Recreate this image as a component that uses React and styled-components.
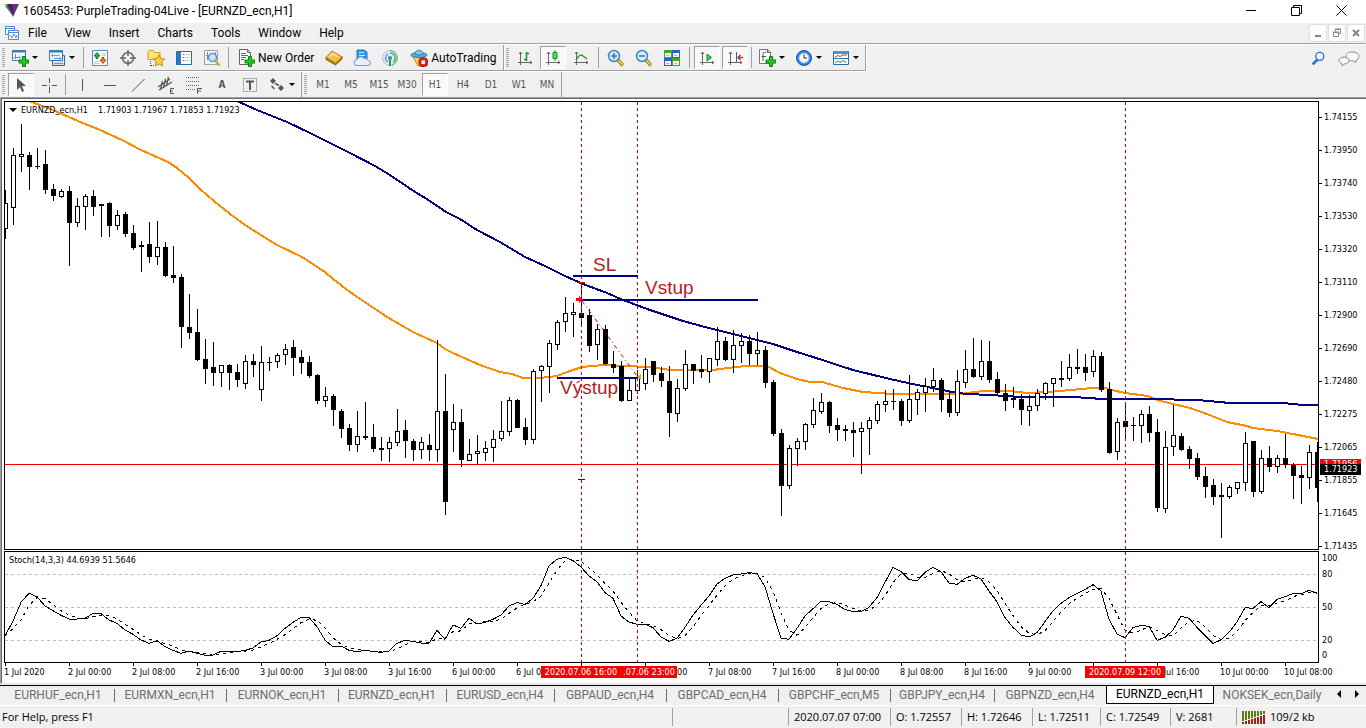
import React from 'react';
import styled, { createGlobalStyle, css } from 'styled-components';

const uiFont = '"Open Sans", "Noto Sans", sans-serif';
const captionFont = 'Roboto, "Open Sans", sans-serif';
const chartFont = '"DejaVu Sans Condensed", "DejaVu Sans", sans-serif';

const GlobalStyle = createGlobalStyle`
  * {
    box-sizing: border-box;
  }
  body {
    margin: 0;
    background: #f0f0f0;
    color: #000;
    font-family: ${uiFont};
    font-size: 11px;
    line-height: 16px;
  }
  button {
    margin: 0;
    padding: 0;
    border: 0;
    background: none;
    color: inherit;
    font: inherit;
  }
  svg {
    display: block;
    flex: none;
  }
`;

const Terminal = styled.div`
  display: flex;
  flex-direction: column;
  height: 100vh;
  overflow: hidden;
`;

/* title and menu */

const TitleBar = styled.header`
  display: flex;
  align-items: center;
  flex: 0 0 23px;
  padding: 0 2px 2px 4px;
  background: #fff;
  h1 {
    flex: 1;
    margin: 0 0 0 4px;
    font-family: ${captionFont};
    font-size: 12px;
    font-weight: 400;
    white-space: nowrap;
  }
`;

const WindowButton = styled.button`
  display: flex;
  align-items: center;
  justify-content: center;
  width: 45px;
  height: 21px;
`;

const MenuBar = styled.nav`
  display: flex;
  align-items: center;
  flex: 0 0 22px;
  padding: 0 1px 2px 5px;
  border-bottom: 1px solid #fff;
  box-shadow: inset 0 -1px 0 #a0a0a0;
`;

const MenuItem = styled.button`
  height: 19px;
  padding: 0 9px;
  font-family: ${captionFont};
  font-size: 12px;
`;

const Spacer = styled.div`
  flex: 1;
`;

const MdiButton = styled.button`
  display: flex;
  align-items: center;
  justify-content: center;
  width: 18px;
  height: 18px;
  margin-left: 1px;
  border: 1px solid #e0e0e0;
  background: #fdfdfd;
`;

/* toolbars */

const Toolbar = styled.div`
  display: flex;
  flex: 0 0 ${(p) => p.$height};
`;

const Group = styled.div`
  display: flex;
  align-items: center;
  border-right: 1px solid #a0a0a0;
  ${(p) =>
    p.$ruled &&
    css`
      height: 26px;
      border-bottom: 1px solid #a0a0a0;
      box-shadow: 1px 1px 0 #fff;
    `}
`;

const Grip = styled.span`
  width: 3px;
  height: 20px;
  margin: 0 2px;
  background: repeating-linear-gradient(#a8a8a8 0 1px, #f0f0f0 1px 2px);
`;

const Separator = styled.span`
  width: 1px;
  height: 21px;
  margin: 0 ${(p) => (p.$wide ? '3px' : '2px')};
  background: #a0a0a0;
`;

const ToolButton = styled.button`
  display: flex;
  align-items: center;
  justify-content: center;
  width: 28px;
  height: 23px;
  color: #555;
  ${(p) =>
    p.$pressed &&
    css`
      width: 26px;
      margin: 0 1px;
      border: 1px solid #fff;
      border-top-color: #a0a0a0;
      border-left-color: #a0a0a0;
      background: #f9f9f9;
    `}
`;

const PeriodButton = styled(ToolButton)`
  font-family: ${chartFont};
  font-size: 10px;
`;

const DropButton = styled.button`
  display: flex;
  align-items: center;
  gap: 3px;
  width: 37px;
  height: 23px;
  padding-left: 4px;
  &::after {
    content: '';
    border: 3px solid transparent;
    border-top-color: #000;
    border-bottom: 0;
  }
`;

const TextButton = styled.button`
  display: flex;
  align-items: center;
  gap: 3px;
  height: 23px;
  padding: 0 6px;
  font-family: ${captionFont};
  font-size: 12px;
  white-space: nowrap;
`;

const ToolbarEnd = styled.div`
  display: flex;
  align-items: center;
  gap: 3px;
  margin-left: auto;
  padding-right: 3px;
`;

/* chart window */

const ChartWindow = styled.main`
  display: grid;
  grid-template-columns: minmax(0, 1fr) 47px;
  grid-template-rows: minmax(0, 449fr) minmax(0, 112fr) 19px;
  row-gap: 1px;
  flex: 1;
  min-height: 0;
  padding: 3px 0 0 3px;
  border: 1px solid #a0a0a0;
  border-right: 0;
  border-bottom-color: #e3e3e3;
  background: #fff;
  box-shadow: inset 1px 1px 0 #696969;
  font-family: ${chartFont};
  font-size: 9px;
  line-height: 12px;
`;

const Pane = styled.section`
  position: relative;
  min-height: 0;
  border: 1px solid #000;
  svg {
    position: absolute;
    inset: 0;
    width: 100%;
    height: 100%;
  }
`;

const PaneTitle = styled.p`
  position: absolute;
  top: 2px;
  left: 4px;
  display: flex;
  align-items: center;
  gap: 4px;
  margin: 0;
  white-space: nowrap;
`;

const SymbolName = styled.span`
  min-width: 73px;
`;

const Triangle = styled.i`
  border: 4px solid transparent;
  border-top-color: #000;
  border-bottom: 0;
`;

const PriceScale = styled.ol`
  position: relative;
  display: flex;
  flex-direction: column;
  justify-content: space-between;
  margin: 0;
  padding: 12px 0 0;
  list-style: none;
  line-height: 8px;
`;

const PriceLabel = styled.li`
  display: flex;
  align-items: center;
  gap: 2px;
  &::before {
    content: '';
    width: 3px;
    height: 1px;
    background: #000;
  }
`;

const PriceTag = styled.li`
  position: absolute;
  left: 1px;
  width: 41px;
  padding-left: 4px;
  background: ${(p) => p.$color};
  color: #fff;
  line-height: 11px;
`;

const LevelScale = styled.ol`
  display: grid;
  grid-template-rows: 14fr 18fr 48fr 18fr 12fr 2fr;
  align-items: center;
  margin: 0;
  padding: 0 0 0 3px;
  list-style: none;
  line-height: 8px;
`;

const TimeScale = styled.div`
  position: relative;
  grid-column: 1 / 3;
  display: grid;
  grid-template-columns: repeat(20, minmax(0, 64fr)) minmax(0, 82fr);
  margin-top: -1px;
  line-height: 12px;
`;

const TimeLabel = styled.span`
  white-space: nowrap;
  &::before {
    content: '';
    display: block;
    width: 1px;
    height: 3px;
    margin-left: 1px;
    background: #000;
  }
`;

const TimeTag = styled.span`
  position: absolute;
  top: 3px;
  width: ${(p) => p.$width};
  background: #f00;
  color: #fff;
  text-align: center;
`;

/* tabs and status */

const TabBar = styled.nav`
  display: flex;
  flex: 0 0 20px;
  margin-top: 1px;
  padding-left: 2px;
  border-top: 1px solid #000;
  font-family: ${captionFont};
  font-size: 12px;
  overflow: hidden;
`;

const Tab = styled.button`
  display: flex;
  align-items: center;
  justify-content: center;
  flex: 0 0 ${(p) => p.$width};
  height: 18px;
  color: #6d6d6d;
  white-space: nowrap;
  & + & {
    background: linear-gradient(#6d6d6d, #6d6d6d) left center / 1px 13px no-repeat;
  }
  &:nth-last-of-type(3) {
    background: none;
  }
  &&[aria-current] {
    margin-top: -1px;
    height: 19px;
    border: 1px solid #000;
    border-top: 0;
    background: #fff;
    color: #000;
  }
`;

const TabArrow = styled.button`
  display: flex;
  align-items: center;
  justify-content: center;
  width: 18px;
  height: 16px;
`;

const StatusBar = styled.footer`
  display: flex;
  align-items: center;
  flex: 0 0 23px;
  border-top: 1px solid #fff;
  white-space: nowrap;
`;

const StatusCell = styled.span`
  display: flex;
  align-items: center;
  gap: 4px;
  flex: ${(p) => (p.$width ? `0 0 ${p.$width}` : '1')};
  height: 18px;
  padding-left: 5px;
  border-left: 1px solid #a0a0a0;
  &:first-child {
    padding-left: 2px;
    border-left: 0;
  }
`;

/* icons */

const Icon = ({ children, size = 18, ...rest }) => (
  <svg width={size} height={size} viewBox="0 0 18 18" fill="none" aria-hidden="true" {...rest}>
    {children}
  </svg>
);

const Plus = () => (
  <path d="M11.500 7.500h3v3.500h3.500v3h-3.500v3.500h-3v-3.500h-3.500v-3h3.500z" fill="#27c927" stroke="#0a7d12" />
);

const LogoIcon = () => (
  <svg width="15" height="13" viewBox="0 0 15 13" aria-hidden="true">
    <path d="M0 0h5l4 12z" fill="#c9cf3e" />
    <path d="M1 2l3-1 5 11z" fill="#3c8f4a" />
    <path d="M3 0h12L9 13z" fill="#6b2d86" />
    <path d="M3 0h5l2 12z" fill="#42205e" />
  </svg>
);

const MenuLogo = () => (
  <svg width="14" height="14" viewBox="0 0 14 14" fill="#fff" stroke="#4d8ad6" aria-hidden="true">
    <path d="M.5.5h9v8h-9zM.5 2.500h9" />
    <path d="M3.500 4.500h10v9h-10zM3.500 6.500h10" />
    <path d="M5 9l2 3 2-4 2 4 1-3" fill="none" />
  </svg>
);

const NewChartIcon = () => (
  <Icon>
    <path d="M1.500 1.500h13v10h-13z" fill="#f4f9ff" stroke="#3d7ab8" />
    <path d="M1 2.500h14" stroke="#3d7ab8" strokeWidth="2" />
    <path d="M4.500 5v5M3 8.500h6M9 6.500v3" stroke="#5d90c4" />
    <Plus />
  </Icon>
);

const ProfilesIcon = () => (
  <Icon>
    <path d="M4.500 6.500h12v10h-12z" fill="#cfe2f7" stroke="#2d66a5" />
    <path d="M1.500 1.500h13v10h-13z" fill="#eaf3fd" stroke="#3d7ab8" />
    <path d="M1 2.500h14" stroke="#3d7ab8" strokeWidth="2" />
    <path d="M3.500 6.500h8M5 5L3.500 6.500 5 8M6 9.500h7M11.500 8L13 9.500 11.500 11M6 14.500h9" stroke="#6d9ccc" />
  </Icon>
);

const MarketIcon = () => (
  <Icon>
    <path d="M1.500 1.500h15v15h-15z" fill="#fff" stroke="#4f8cc9" />
    <path d="M10 4.500h5M11 6.500h4M3 12.500h5M3 14.500h5" stroke="#c9c9c9" />
    <path d="M6 3.500L9 7H7v2.500H5V7H3z" fill="#2fb82f" stroke="#15801c" />
    <path d="M12 14.500L15 11h-2V8.500h-2V11H9z" fill="#ff7b3d" stroke="#c53a0a" />
  </Icon>
);

const TargetIcon = () => (
  <Icon stroke="#666">
    <circle cx="9" cy="9" r="5.500" strokeWidth="1.500" />
    <path d="M9 1v6M9 11v6M1 9h6M11 9h6" strokeWidth="1.500" />
  </Icon>
);

const FavoritesIcon = () => (
  <Icon>
    <path d="M1 2.500l1-1h4l1.500 2H13v7H1z" fill="#ffe27a" stroke="#c7a02b" />
    <path d="M3.500 12v5M4 16.500h4" stroke="#444" strokeDasharray="1 1" />
    <path d="M12 6l1.800 3.500 4 .500-3 2.800.800 4-3.600-1.900L8.400 16.800l.800-4-3-2.800 4-.500z" fill="#ffd23e" stroke="#c48a12" />
  </Icon>
);

const NavigatorIcon = () => (
  <Icon>
    <path d="M1.500 2.500h15v13h-15z" fill="#fff" stroke="#2568ad" />
    <path d="M2 3h4v12H2z" fill="#2d79c4" />
    <path d="M8 5.500h7M8 8.500h7M8 11.500h7" stroke="#b8cde6" />
    <path d="M8 5.500h1M8 8.500h1M8 11.500h1" stroke="#c33" />
  </Icon>
);

const TesterIcon = () => (
  <Icon>
    <path d="M1.500 1.500h13v14h-13z" fill="#f5f5f5" stroke="#a0a0a0" />
    <path d="M4.500 3v8M7.500 5v3M3 6.500h3M12.500 3v3" stroke="#888" />
    <circle cx="9.500" cy="8.500" r="4" fill="#c4e2f9" fillOpacity=".85" stroke="#5a96cf" strokeWidth="1.500" />
    <path d="M12.500 12l4 4.500" stroke="#d9a520" strokeWidth="2.500" />
  </Icon>
);

const NewOrderIcon = () => (
  <Icon>
    <path d="M2.500.5h8l3 3v12h-11z" fill="#fff" stroke="#666" />
    <path d="M10.500.5v3h3M4 4.500h5M4 6.500h7M4 8.500h5M4 10.500h3" stroke="#666" />
    <Plus />
  </Icon>
);

const BookIcon = () => (
  <Icon>
    <path d="M1 8v2.500l9.500 5.500 6.500-6V7.500L10.500 14z" fill="#b97d18" stroke="#8c5f0e" />
    <path d="M1 8.500L7 2l10 6-6.500 6z" fill="#f0c14b" stroke="#b07a14" />
    <path d="M4.500 8L8 4.500l5 3" stroke="#ffe79b" strokeWidth="1.500" />
  </Icon>
);

const CloudIcon = () => (
  <Icon>
    <path d="M4 1h7l3 2v8H4z" fill="#2f9ae8" stroke="#1878c4" />
    <path d="M6 3.500h5M6 6.500h6" stroke="#cbe8ff" />
    <path d="M4 16.500a3 3 0 0 1 0-6 4 4 0 0 1 7-1 3.500 3.500 0 0 1 4 2 2.500 2.500 0 0 1 0 5z" fill="#e9eef7" stroke="#7c93bb" />
  </Icon>
);

const SignalIcon = () => (
  <Icon>
    <circle cx="9" cy="9" r="7.500" fill="#e3edf0" stroke="#a8c4cf" />
    <path d="M9 4a5 5 0 0 1 3 9" stroke="#4fae62" strokeWidth="1.500" />
    <path d="M9 1.500a7.500 7.500 0 0 1 2 14.500" stroke="#7bbd83" strokeWidth="1.500" />
    <path d="M7 13a4.500 4.500 0 0 1 0-8" stroke="#6b9dc9" strokeWidth="1.500" />
    <circle cx="9" cy="9" r="2" fill="#3a86c8" />
    <path d="M9 11v6" stroke="#2c9c44" strokeWidth="2" />
  </Icon>
);

const AutoIcon = () => (
  <Icon>
    <path d="M3 8h12l-2 8-5 1z" fill="#ffd357" stroke="#c7911f" />
    <ellipse cx="9" cy="6" rx="8" ry="2.500" fill="#56aede" stroke="#2b7fb5" />
    <path d="M5 5c0-5 8-5 8 0-2 1.500-6 1.500-8 0z" fill="#7cc8ec" stroke="#2b7fb5" />
    <rect x="9" y="9" width="8.500" height="8.500" rx="3" fill="#e1261c" stroke="#a8140c" />
    <path d="M11.500 11.500h3.500v3.500h-3.500z" fill="#fff" />
  </Icon>
);

const Axes = () => <path d="M4.500 3v13M2 13.500h14M3 5l1.500-2L6 5M14 12l2 1.500-2 1.500" stroke="#666" />;

const BarsIcon = () => (
  <Icon>
    <Axes />
    <path d="M8 10.500h2.500M10.500 3v9M10.500 4.500H13" stroke="#16922a" strokeWidth="1.500" />
  </Icon>
);

const CandlesIcon = () => (
  <Icon>
    <Axes />
    <path d="M11 1v11" stroke="#16922a" />
    <path d="M9 3.500h4v6H9z" fill="#4be04f" stroke="#16922a" />
  </Icon>
);

const LineIcon = () => (
  <Icon>
    <Axes />
    <path d="M4 11c3-5 5-6 7-4l4 3" stroke="#2a9d3a" strokeWidth="1.500" />
  </Icon>
);

const ZoomIcon = ({ plus }) => (
  <Icon>
    <path d="M11 11l5 5.500" stroke="#a87910" strokeWidth="3.500" />
    <path d="M11 11l5 5" stroke="#ffd94f" strokeWidth="1.500" />
    <circle cx="7" cy="7" r="5.500" fill="#d6ecfb" stroke="#3d86c6" strokeWidth="1.500" />
    <path d={plus ? 'M4 7h6M7 4v6' : 'M4 7h6'} stroke="#2f78b8" strokeWidth="1.500" />
  </Icon>
);

const TilesIcon = () => (
  <Icon>
    <path d="M1 1h8v8H1zM9 9h8v8H9z" fill="#46a325" />
    <path d="M9 1h8v8H9zM1 9h8v8H1z" fill="#2c60cf" />
    <path d="M2 4h6v4H2zM10 4h6v4h-6zM2 12h6v4H2zM10 12h6v4h-6z" fill="#f2f7ff" />
    <path d="M3 6.500h3M11 6.500h3M3 14.500h3M11 14.500h3" stroke="#9cb6e0" />
  </Icon>
);

const ScrollIcon = () => (
  <Icon>
    <Axes />
    <path d="M9 5l4.500 3.500L9 12z" fill="#3fd04b" stroke="#16922a" />
  </Icon>
);

const ShiftIcon = () => (
  <Icon>
    <Axes />
    <path d="M10.500 3v10" stroke="#2568ad" />
    <path d="M17 8.500h-5M14.500 6L12 8.500l2.500 2.500" stroke="#c23a10" strokeWidth="1.500" />
  </Icon>
);

const IndicatorIcon = () => (
  <Icon>
    <path d="M1.500.5h8l3 3v11h-11z" fill="#fff" stroke="#777" />
    <path d="M9.500.5v3h3M8 3.500c-3-1-3 1-3 3V12M3.500 7.500H8" stroke="#555" />
    <Plus />
  </Icon>
);

const ClockIcon = () => (
  <Icon>
    <circle cx="9" cy="9" r="7.500" fill="#2e7fdd" stroke="#1c58a5" />
    <circle cx="9" cy="9" r="5" fill="#f1f6fc" stroke="#9cc3ee" />
    <path d="M9 5.500V9h3" stroke="#333" />
  </Icon>
);

const TemplateIcon = () => (
  <Icon>
    <path d="M1.500 2.500h15v13h-15z" fill="#fff" stroke="#2b6cb0" />
    <path d="M2 3.500h14" stroke="#4d93d9" strokeWidth="3" />
    <path d="M2 9.500h14" stroke="#2b6cb0" />
    <path d="M3 8l3-1.500 2 1 3-1.500h4" stroke="#b03a2e" />
    <path d="M3 14l3-2 2 1.500 3-2 3 2" stroke="#2d9a3b" />
  </Icon>
);

const SearchIcon = () => (
  <Icon size={16}>
    <path d="M9 9l-6 6" stroke="#2f6fe0" strokeWidth="3" />
    <circle cx="11" cy="6" r="4.500" fill="#f4f8ff" stroke="#2f6fe0" strokeWidth="1.500" />
  </Icon>
);

const ChatIcon = () => (
  <svg width="22" height="18" viewBox="0 0 22 18" fill="#f8f8f8" stroke="#8c8c8c" aria-hidden="true">
    <path d="M14 2c4 0 7 1.500 7 4.500 0 2-1.500 3-3 3.500v2.500L15.500 11C11 11 8 9.500 8 6.500S10.500 2 14 2z" />
    <path d="M6 7c3 0 5 1.500 5 3.500S9 14 6.500 14L4 16v-2.500c-1.500-.500-3-1.500-3-3C1 8.500 3 7 6 7z" />
  </svg>
);

const CursorIcon = () => (
  <Icon>
    <path d="M5 2v12l3-3 2 5 2-1-2-5h4z" fill="#555" />
  </Icon>
);

const CrossIcon = () => (
  <Icon>
    <path d="M9.500 2v5M9.500 11v6M2 9.500h5M12 9.500h5M9 9.500h1" stroke="#555" />
  </Icon>
);

const ChannelIcon = () => (
  <Icon>
    <path d="M1 11L13 3M2 14L15 6M5.500 5l-2 9M8.500 3l-2 9M11.500 1l-2 9" stroke="#555" strokeWidth="1.300" />
    <path d="M17 12.500h-3.500v5H17M13.500 15H16" stroke="#555" />
  </Icon>
);

const FiboIcon = () => (
  <Icon>
    <path d="M1 1.500h14M1 5.500h14M1 9.500h14M1 13.500h9" stroke="#666" strokeDasharray="1 1" />
    <path d="M12.500 18v-5.500H17M12.500 15H16" stroke="#555" />
  </Icon>
);

const LabelIcon = () => (
  <Icon>
    <path d="M2.500 2.500h13v13h-13z" stroke="#666" strokeDasharray="1 1" />
    <path d="M5 5.500h8M9 5.500V14" stroke="#555" strokeWidth="2" />
  </Icon>
);

const ShapesIcon = () => (
  <Icon>
    <path d="M2 5l3-3 3 3-3 3zM10 12l3 3 3-3-3-3z" fill="#555" />
    <path d="M3.500 10l3 3M7 7.500l4 2" stroke="#555" strokeWidth="1.500" />
  </Icon>
);

const TrafficIcon = () => (
  <svg width="24" height="13" viewBox="0 0 24 13" aria-hidden="true">
    {Array.from({ length: 8 }, (_, i) => (
      <g key={i}>
        <rect x={i * 3} y="0" width="2" height={10 - i} fill="#5a7d12" />
        <rect x={i * 3} y={11 - i} width="2" height={2 + i} fill="#a32010" />
      </g>
    ))}
  </svg>
);

/* data */

// high, low, body top, body bottom, 1 = bearish
const CANDLES = [
  [190, 239, 203, 229, 0], [148, 225, 155, 208, 0], [124, 172, 154, 157, 0], [152, 190, 155, 167, 1],
  [148, 169, 166, 167, 1], [150, 194, 164, 190, 1], [184, 201, 189, 196, 1], [189, 198, 191, 197, 0],
  [186, 266, 191, 223, 1], [198, 227, 206, 223, 0], [194, 230, 196, 207, 0], [190, 216, 196, 207, 1],
  [204, 237, 204, 206, 1], [202, 237, 203, 226, 1], [210, 230, 215, 226, 0], [212, 237, 214, 234, 1],
  [225, 250, 233, 248, 1], [241, 272, 245, 247, 1], [222, 263, 244, 257, 1], [221, 265, 247, 257, 0],
  [242, 277, 247, 276, 1], [246, 283, 275, 278, 1], [274, 348, 277, 327, 1], [294, 339, 327, 333, 1],
  [309, 361, 332, 360, 1], [339, 384, 359, 369, 1], [342, 386, 367, 373, 1], [365, 387, 365, 373, 0],
  [364, 390, 365, 373, 1], [364, 387, 372, 380, 1], [355, 389, 361, 384, 0], [354, 377, 361, 365, 1],
  [346, 401, 362, 390, 0], [357, 371, 362, 363, 1], [353, 368, 355, 362, 0], [344, 365, 349, 355, 0],
  [340, 376, 347, 358, 1], [350, 374, 357, 363, 1], [356, 378, 362, 376, 1], [374, 404, 375, 401, 1],
  [387, 407, 396, 401, 0], [394, 426, 396, 410, 1], [409, 438, 411, 429, 1], [424, 451, 428, 445, 1],
  [411, 452, 436, 445, 0], [402, 440, 436, 438, 1], [424, 452, 437, 449, 1], [437, 461, 448, 450, 1],
  [437, 462, 442, 449, 0], [409, 446, 431, 443, 0], [420, 458, 430, 441, 1], [439, 461, 441, 450, 1],
  [437, 459, 442, 450, 0], [434, 461, 445, 450, 1], [340, 462, 411, 450, 0], [374, 515, 411, 502, 1],
  [404, 452, 422, 430, 0], [409, 467, 422, 460, 1], [439, 461, 454, 461, 0], [435, 464, 451, 454, 0],
  [441, 461, 448, 453, 0], [430, 462, 439, 448, 0], [401, 441, 431, 439, 0], [397, 436, 400, 432, 0],
  [399, 428, 400, 428, 1], [418, 445, 427, 440, 1], [369, 444, 371, 440, 0], [365, 402, 366, 371, 0],
  [340, 393, 343, 367, 0], [320, 350, 322, 345, 0], [297, 332, 313, 322, 0], [303, 337, 312, 315, 0],
  [282, 324, 313, 318, 1], [309, 352, 315, 346, 1], [324, 360, 329, 345, 0], [325, 365, 329, 364, 1],
  [351, 373, 364, 368, 1], [361, 402, 366, 401, 1], [379, 401, 390, 401, 0], [370, 394, 377, 391, 0],
  [358, 390, 369, 384, 0], [361, 382, 361, 375, 1], [367, 387, 373, 381, 1], [366, 437, 381, 413, 1],
  [379, 422, 388, 414, 0], [350, 391, 364, 389, 0], [364, 384, 364, 371, 1], [355, 378, 369, 372, 1],
  [358, 383, 358, 372, 0], [327, 366, 341, 360, 0], [337, 361, 341, 360, 1], [330, 373, 345, 360, 0],
  [333, 363, 341, 346, 0], [335, 365, 341, 354, 1], [332, 365, 350, 354, 0], [346, 388, 350, 383, 1],
  [380, 436, 382, 434, 1], [429, 516, 433, 486, 1], [445, 489, 448, 486, 0], [438, 466, 441, 449, 0],
  [423, 450, 424, 442, 0], [398, 428, 410, 425, 0], [393, 414, 402, 412, 0], [401, 433, 402, 426, 1],
  [418, 441, 425, 430, 1], [425, 441, 429, 431, 1], [422, 457, 430, 433, 1], [422, 474, 428, 432, 0],
  [417, 455, 420, 429, 0], [401, 424, 404, 421, 0], [390, 412, 401, 405, 0], [389, 410, 401, 402, 1],
  [399, 426, 401, 421, 1], [375, 423, 399, 421, 0], [389, 415, 392, 400, 0], [378, 412, 386, 393, 0],
  [368, 392, 380, 387, 0], [378, 412, 380, 400, 1], [392, 417, 399, 413, 1], [370, 416, 381, 413, 0],
  [350, 388, 369, 383, 0], [338, 378, 369, 377, 1], [340, 380, 361, 377, 0], [341, 383, 361, 380, 1],
  [372, 396, 379, 393, 1], [384, 411, 393, 401, 1], [387, 408, 398, 400, 1], [394, 425, 399, 410, 1],
  [395, 426, 406, 411, 0], [389, 411, 393, 406, 0], [382, 400, 383, 394, 0], [378, 407, 378, 384, 0],
  [361, 387, 378, 380, 1], [354, 381, 367, 379, 0], [349, 374, 367, 369, 1], [354, 381, 367, 373, 1],
  [350, 377, 356, 372, 0], [352, 392, 356, 390, 1], [382, 454, 389, 453, 1], [418, 460, 422, 452, 0],
  [405, 439, 421, 427, 1], [417, 441, 425, 426, 1], [410, 443, 414, 426, 0], [406, 442, 414, 433, 1],
  [419, 512, 432, 508, 1], [431, 513, 447, 509, 0], [405, 456, 435, 447, 0], [433, 451, 436, 450, 1],
  [446, 469, 449, 459, 1], [453, 480, 458, 477, 1], [467, 498, 476, 487, 1], [479, 505, 485, 497, 1],
  [483, 538, 495, 497, 1], [485, 499, 487, 497, 0], [482, 494, 482, 489, 0], [432, 491, 443, 483, 0],
  [441, 497, 441, 492, 1], [450, 494, 458, 492, 0], [446, 472, 458, 467, 1], [455, 473, 458, 467, 0],
  [434, 468, 458, 465, 1], [463, 499, 465, 476, 1], [466, 504, 475, 478, 1], [445, 489, 452, 478, 0],
  [442, 502, 452, 488, 1],
];

const FAST_MA =
  '29,101 53,110 78,121 100,130 122,140 141,150 168,162 177,168 189,178 200,189 214,201 230,214 248,227 277,245 302,257 325,272 333,279 350,292 387,317 413,332 437,343 445,349 453,353 480,365 500,372 512,374 523,378 540,378 557,376 567,372 582,367 603,365 623,366 650,367 670,370 713,370 720,369 745,366 767,366 780,373 797,379 810,382 822,382 843,388 853,390 863,392 893,394 960,394 983,391 1010,391 1027,393 1047,392 1060,391 1070,390 1093,388 1105,388 1112,390 1125,393 1148,396 1157,400 1173,404 1190,408 1207,414 1227,422 1247,426 1253,428 1277,431 1293,434 1318,439';

const SLOW_MA =
  '237,101 257,110 287,122 310,133 330,143 350,153 375,166 390,175 412,190 430,201 446,212 460,219 477,230 500,242 525,257 545,266 565,276 583,284 607,293 623,300 650,310 683,321 705,327 717,330 733,334 773,344 797,352 813,357 853,370 890,379 917,385 933,388 952,392 967,394 990,395 1020,397 1073,397 1103,399 1150,399 1197,400 1230,403 1283,403 1303,405 1318,405';

// %K per bar, in thirds of a pane pixel counted from the top
const STOCH_K = [
  273, 228, 172, 145, 155, 183, 197, 211, 222, 222, 220, 205, 206, 225, 235, 255, 268, 285, 295, 287, 305, 316, 325,
  318, 325, 331, 330, 319, 319, 320, 316, 309, 291, 286, 272, 250, 232, 217, 217, 245, 285, 306, 303, 316, 320, 316,
  319, 322, 318, 295, 286, 289, 294, 295, 256, 283, 240, 250, 220, 237, 232, 223, 210, 183, 173, 178, 160, 122, 62,
  43, 37, 47, 66, 93, 110, 143, 160, 213, 231, 238, 237, 248, 276, 289, 280, 247, 210, 181, 153, 117, 100, 90, 87,
  83, 86, 125, 205, 279, 283, 250, 213, 191, 169, 170, 178, 194, 199, 199, 187, 158, 112, 67, 80, 103, 108, 82, 67,
  80, 114, 118, 100, 91, 102, 138, 170, 218, 247, 270, 276, 263, 230, 198, 175, 158, 145, 134, 119, 138, 222, 267,
  278, 248, 241, 244, 286, 277, 255, 213, 220, 247, 271, 295, 285, 262, 231, 188, 190, 170, 188, 163, 155, 146, 147,
  136, 145,
];

// %D is the three bar average of %K
const STOCH_D = STOCH_K.map((_, i) => {
  const last = STOCH_K.slice(Math.max(0, i - 2), i + 1);
  return last.reduce((sum, v) => sum + v, 0) / last.length;
});

const toPoints = (values) => values.map((v, i) => `${5 + i * 8},${545 + v / 3}`).join(' ');

const MARKERS = [581, 637, 1125];

const TIME_TAGS = [
  { x: 541, width: '80px', text: '2020.07.06 16:00' },
  { x: 621, width: '56px', text: '.07.06 23:00' },
  { x: 1085, width: '80px', text: '2020.07.09 12:00' },
];

const PRICES = [
  '1.74155', '1.73950', '1.73740', '1.73530', '1.73320', '1.73110', '1.72900',
  '1.72690', '1.72480', '1.72275', '1.72065', '1.71855', '1.71645', '1.71435',
];

const PRICE_TAGS = [
  { y: 459, text: '1.71956', color: '#f00' },
  { y: 464, text: '1.71923', color: '#000' },
];

// blank where a marker tag covers the whole label
const TIMES = [
  '1 Jul 2020', '2 Jul 00:00', '2 Jul 08:00', '2 Jul 16:00', '3 Jul 00:00', '3 Jul 08:00', '3 Jul 16:00',
  '6 Jul 00:00', '6 Jul 08:00', '', '7 Jul 00:00', '7 Jul 08:00', '7 Jul 16:00', '8 Jul 00:00',
  '8 Jul 08:00', '8 Jul 16:00', '9 Jul 00:00', '', '9 Jul 16:00', '10 Jul 00:00', '10 Jul 08:00',
];

const MENU = ['File', 'View', 'Insert', 'Charts', 'Tools', 'Window', 'Help'];
const PERIODS = ['M1', 'M5', 'M15', 'M30', 'H1', 'H4', 'D1', 'W1', 'MN'];

const TABS = [
  ['EURHUF_ecn,H1', 112], ['EURMXN_ecn,H1', 112], ['EURNOK_ecn,H1', 112], ['EURNZD_ecn,H1', 108],
  ['EURUSD_ecn,H4', 108], ['GBPAUD_ecn,H4', 112], ['GBPCAD_ecn,H4', 112], ['GBPCHF_ecn,M5', 112],
  ['GBPJPY_ecn,H4', 104], ['GBPNZD_ecn,H4', 112], ['EURNZD_ecn,H1', 108], ['NOKSEK_ecn,Daily', 116],
];

/* panes */

const MarkerLines = ({ y1, y2 }) =>
  MARKERS.map((x) => (
    <line key={x} x1={x + 0.5} x2={x + 0.5} y1={y1} y2={y2} stroke="#e00000" strokeDasharray="3 3" />
  ));

const PriceChart = () => (
  <svg viewBox="5 102 1313 447" preserveAspectRatio="none" role="img" aria-label="EURNZD H1 candles">
    <g shapeRendering="crispEdges">
      <rect x="5" y="464" width="1313" height="1" fill="#f00" />
      <g fill="none" strokeWidth="2">
        <polyline points={FAST_MA} stroke="#ff8c00" />
        <polyline points={SLOW_MA} stroke="#000080" />
      </g>
      {CANDLES.map(([high, low, top, bottom, bear], i) => {
        const x = 5 + i * 8;
        return (
          <g key={x}>
            <rect x={x} y={high} width="1" height={low - high} />
            <rect x={x - 2} y={top} width="5" height={bottom - top} />
            {!bear && <rect x={x - 1} y={top + 1} width="3" height={bottom - top - 2} fill="#fff" />}
          </g>
        );
      })}
      <MarkerLines y1={102} y2={549} />
      <g fill="#000080">
        <rect x="573" y="275" width="65" height="2" />
        <rect x="581" y="299" width="177" height="2" />
        <rect x="557" y="377" width="80" height="2" />
      </g>
      <rect x="578" y="282" width="7" height="1" fill="#f00" />
      <rect x="578" y="479" width="7" height="1" fill="#00f" />
    </g>
    <path d="M576 298h3v-2l4 3.500-4 3.500v-2h-3z" fill="#f00" />
    <path d="M582 301L637 376" stroke="#e00000" strokeDasharray="4 3 1 3" />
    <path d="M637 377l4-3v6z" fill="#daa520" />
    <g fill="#b22222" fontFamily='"Liberation Sans", Arial, sans-serif' fontSize="19">
      <text x="593" y="271">SL</text>
      <text x="645" y="294">Vstup</text>
      <text x="560" y="394">Výstup</text>
    </g>
  </svg>
);

const StochChart = () => (
  <svg viewBox="5 552 1313 110" preserveAspectRatio="none" fill="none" role="img" aria-label="Stochastic oscillator">
    {[574, 607, 640].map((y) => (
      <line key={y} x1="5" x2="1318" y1={y + 0.5} y2={y + 0.5} stroke="#c0c0c0" strokeDasharray="3 3" />
    ))}
    <g stroke="#000" shapeRendering="crispEdges">
      <polyline points={toPoints(STOCH_D)} strokeDasharray="3 4" />
      <polyline points={toPoints(STOCH_K)} />
    </g>
    <MarkerLines y1={552} y2={662} />
  </svg>
);

const Tool = ({ label, icon, ...rest }) => (
  <ToolButton type="button" aria-label={label} {...rest}>
    {icon}
  </ToolButton>
);

const App = () => (
  <Terminal>
    <GlobalStyle />
    <TitleBar>
      <LogoIcon />
      <h1>1605453: PurpleTrading-04Live - [EURNZD_ecn,H1]</h1>
      <WindowButton aria-label="Minimize">
        <svg width="11" height="11" stroke="#000"><path d="M0 5.500h10" /></svg>
      </WindowButton>
      <WindowButton aria-label="Restore">
        <svg width="11" height="11" fill="none" stroke="#000"><path d="M.5 2.500h8v8h-8zM2.500 2V.5h8v8H9" /></svg>
      </WindowButton>
      <WindowButton aria-label="Close">
        <svg width="11" height="11" stroke="#000"><path d="M.5.5l10 10M10.500.5l-10 10" /></svg>
      </WindowButton>
    </TitleBar>
    <MenuBar>
      <MenuLogo />
      {MENU.map((item) => (
        <MenuItem key={item} type="button">{item}</MenuItem>
      ))}
      <Spacer />
      <MdiButton aria-label="Minimize chart">
        <svg width="10" height="10" stroke="#7a8794" strokeWidth="2"><path d="M2 8h6" /></svg>
      </MdiButton>
      <MdiButton aria-label="Restore chart">
        <svg width="10" height="10" fill="none" stroke="#7a8794"><path d="M1.500 4.500h5v4h-5zM1 4h6M3.500 3V1.500h5v4H7M3 1h6" /></svg>
      </MdiButton>
      <MdiButton aria-label="Close chart">
        <svg width="10" height="10" stroke="#7a8794" strokeWidth="2"><path d="M2 2l6 6M8 2l-6 6" /></svg>
      </MdiButton>
    </MenuBar>

    <Toolbar $height="27px">
      <Group $ruled>
        <Grip />
        <DropButton aria-label="New chart"><NewChartIcon /></DropButton>
        <DropButton aria-label="Profiles"><ProfilesIcon /></DropButton>
        <Separator />
        <Tool label="Market Watch" icon={<MarketIcon />} />
        <Tool label="Data Window" icon={<TargetIcon />} />
        <Tool label="Navigator" icon={<FavoritesIcon />} />
        <Tool label="Terminal" icon={<NavigatorIcon />} />
        <Tool label="Strategy Tester" icon={<TesterIcon />} />
        <Separator />
        <TextButton type="button"><NewOrderIcon />New Order</TextButton>
        <Tool label="MetaEditor" icon={<BookIcon />} />
        <Tool label="Virtual Hosting" icon={<CloudIcon />} />
        <Tool label="Signals" icon={<SignalIcon />} />
        <TextButton type="button"><AutoIcon />AutoTrading</TextButton>
      </Group>
      <Group $ruled>
        <Grip />
        <Tool label="Bar Chart" icon={<BarsIcon />} />
        <Tool label="Candlesticks" icon={<CandlesIcon />} $pressed />
        <Tool label="Line Chart" icon={<LineIcon />} />
        <Separator $wide />
        <Tool label="Zoom In" icon={<ZoomIcon plus />} />
        <Tool label="Zoom Out" icon={<ZoomIcon />} />
        <Tool label="Tile Windows" icon={<TilesIcon />} />
        <Separator $wide />
        <Tool label="Auto Scroll" icon={<ScrollIcon />} $pressed />
        <Tool label="Chart Shift" icon={<ShiftIcon />} $pressed />
        <Separator />
        <DropButton aria-label="Indicators"><IndicatorIcon /></DropButton>
        <DropButton aria-label="Periodicity"><ClockIcon /></DropButton>
        <DropButton aria-label="Templates"><TemplateIcon /></DropButton>
      </Group>
      <ToolbarEnd>
        <Tool label="Search" icon={<SearchIcon />} />
        <Tool label="Community" icon={<ChatIcon />} />
      </ToolbarEnd>
    </Toolbar>
    <Toolbar $height="25px">
      <Group>
        <Grip />
        <Tool label="Cursor" icon={<CursorIcon />} $pressed />
        <Tool label="Crosshair" icon={<CrossIcon />} />
        <Separator />
        <Tool label="Vertical Line" icon={<Icon stroke="#555"><path d="M9.500 3v12" /></Icon>} />
        <Tool label="Horizontal Line" icon={<Icon stroke="#555"><path d="M3 9.500h12" /></Icon>} />
        <Tool label="Trendline" icon={<Icon stroke="#555"><path d="M3 15.500L15.500 3" /></Icon>} />
        <Tool label="Equidistant Channel" icon={<ChannelIcon />} />
        <Tool label="Fibonacci Retracement" icon={<FiboIcon />} />
        <PeriodButton type="button" aria-label="Text"><b>A</b></PeriodButton>
        <Tool label="Text Label" icon={<LabelIcon />} />
        <DropButton aria-label="Arrows"><ShapesIcon /></DropButton>
      </Group>
      <Group>
        <Grip />
        {PERIODS.map((period) => (
          <PeriodButton key={period} type="button" $pressed={period === 'H1'}>{period}</PeriodButton>
        ))}
      </Group>
    </Toolbar>

    <ChartWindow>
      <Pane>
        <PriceChart />
        <PaneTitle>
          <Triangle />
          <SymbolName>EURNZD_ecn,H1</SymbolName>
          1.71903 1.71967 1.71853 1.71923
        </PaneTitle>
      </Pane>
      <PriceScale>
        {PRICES.map((price) => (
          <PriceLabel key={price}>{price}</PriceLabel>
        ))}
        {PRICE_TAGS.map((tag) => (
          <PriceTag key={tag.text} $color={tag.color} style={{ top: `${((tag.y - 101) / 449) * 100}%` }}>
            {tag.text}
          </PriceTag>
        ))}
      </PriceScale>
      <Pane>
        <StochChart />
        <PaneTitle>Stoch(14,3,3) 44.6939 51.5646</PaneTitle>
      </Pane>
      <LevelScale>
        {[100, 80, 50, 20, 0].map((level) => (
          <li key={level}>{level}</li>
        ))}
      </LevelScale>
      <TimeScale>
        {TIMES.map((time, i) => (
          <TimeLabel key={i}>{time}</TimeLabel>
        ))}
        {TIME_TAGS.map((tag) => (
          <TimeTag key={tag.x} $width={tag.width} style={{ left: `${((tag.x - 4) / 1362) * 100}%` }}>
            {tag.text}
          </TimeTag>
        ))}
      </TimeScale>
    </ChartWindow>

    <TabBar>
      {TABS.map(([name, width], i) => (
        <Tab key={i} type="button" $width={`${width}px`} aria-current={i === 10 ? 'page' : undefined}>{name}</Tab>
      ))}
      <TabArrow aria-label="Scroll left">
        <svg width="4" height="8"><path d="M4 0v8L0 4z" /></svg>
      </TabArrow>
      <TabArrow aria-label="Scroll right">
        <svg width="4" height="8"><path d="M0 0v8l4-4z" /></svg>
      </TabArrow>
    </TabBar>
    <StatusBar>
      <StatusCell>For Help, press F1</StatusCell>
      <StatusCell $width="116px" />
      <StatusCell $width="102px">2020.07.07 07:00</StatusCell>
      <StatusCell $width="71px">O: 1.72557</StatusCell>
      <StatusCell $width="71px">H: 1.72646</StatusCell>
      <StatusCell $width="68px">L: 1.72511</StatusCell>
      <StatusCell $width="70px">C: 1.72549</StatusCell>
      <StatusCell $width="66px">V: 2681</StatusCell>
      <StatusCell $width="130px"><TrafficIcon />109/2 kb</StatusCell>
    </StatusBar>
  </Terminal>
);

export default App;
